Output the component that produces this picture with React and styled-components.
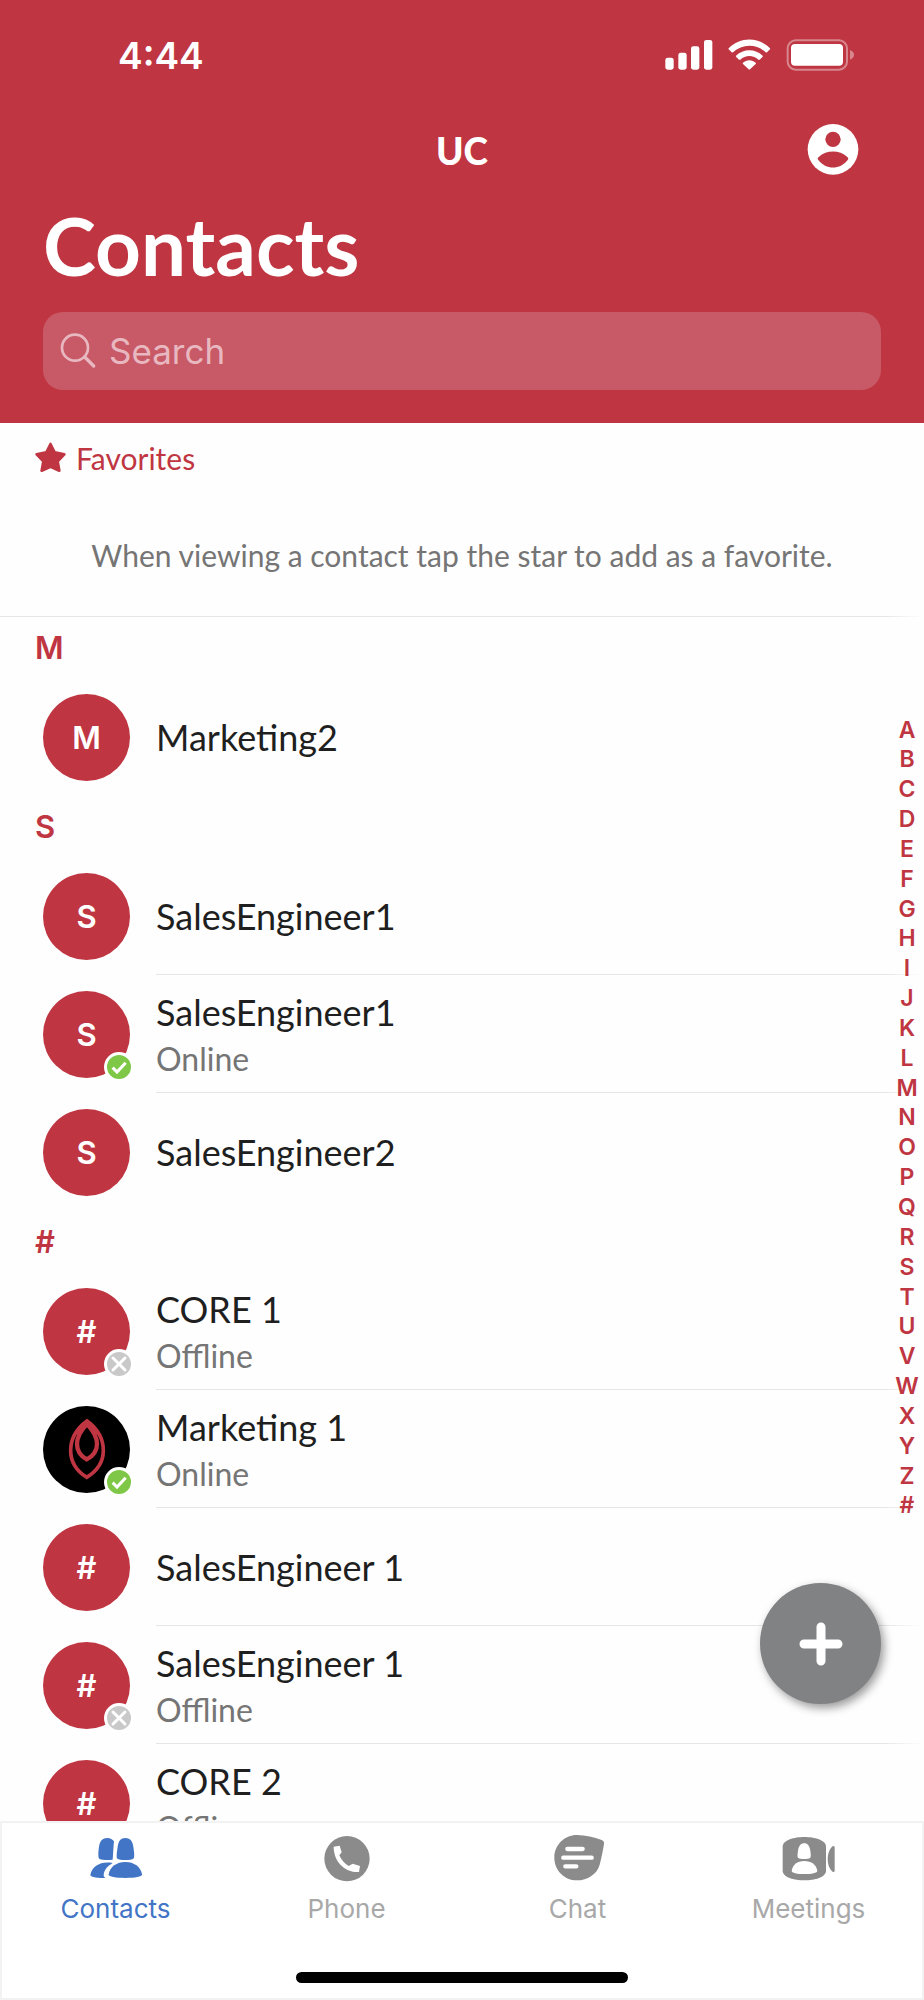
import React, { useState } from "react";
import styled, { createGlobalStyle } from "styled-components";

const RED = "#bf3642";
const BLUE = "#4275c6";

const GlobalStyle = createGlobalStyle`
  * {
    box-sizing: border-box;
  }

  body {
    margin: 0;
    background: #fff;
    font-family: Lato, "Open Sans", sans-serif;
  }
`;

// Styled components
const Screen = styled.div`
  display: flex;
  flex-direction: column;
  height: 100vh;
  background: #fefefe;
`;

const Header = styled.header`
  flex: none;
  padding-bottom: 33px;
  background: ${RED};
  color: #fff;
`;

const StatusBar = styled.div`
  display: flex;
  justify-content: space-between;
  align-items: center;
  height: 110px;
  padding: 0 69px 0 118px;
`;

const Time = styled.time`
  font-family: Inter, sans-serif;
  font-size: 37px;
  font-weight: 600;
`;

const StatusIcons = styled.div`
  display: flex;
  gap: 15px;
`;

const NavBar = styled.div`
  display: grid;
  grid-template-columns: 1fr auto 1fr;
  align-items: center;
  height: 80px;
  padding: 0 65px;
`;

const AppName = styled.span`
  grid-column: 2;
  font-size: 37px;
  font-weight: 900;
`;

const ProfileButton = styled.button`
  display: flex;
  justify-self: end;
  padding: 0;
  border: none;
  background: none;
  color: inherit;
  cursor: pointer;
`;

const Title = styled.h1`
  margin: 0 43px 12px;
  font-size: 80px;
  font-weight: 700;
  line-height: 110px;
`;

const SearchBox = styled.label`
  display: flex;
  align-items: center;
  gap: 12px;
  height: 78px;
  margin: 0 43px;
  padding: 0 16px;
  border-radius: 20px;
  background: #c85966;
  color: #e8b8c1;
`;

const SearchInput = styled.input`
  flex: 1;
  min-width: 0;
  padding: 0;
  border: none;
  outline: none;
  background: none;
  color: #fff;
  font-family: Inter, sans-serif;
  font-size: 35px;

  &::placeholder {
    color: #e8b8c1;
    opacity: 1;
  }
`;

const Main = styled.main`
  position: relative;
  flex: 1;
  min-height: 0;
`;

const ScrollArea = styled.div`
  height: 100%;
  overflow-y: auto;
  scrollbar-width: none;
`;

/* hairline that fades out under the letter index */
const line = `linear-gradient(to right, #e6e6e6 calc(100% - 40px), transparent) bottom / 100% 1px no-repeat`;

const Favorites = styled.section`
  height: 194px;
  background: ${line};
`;

const FavoritesTitle = styled.h2`
  display: flex;
  align-items: center;
  gap: 10px;
  height: 69px;
  margin: 0;
  padding-left: 35px;
  color: ${RED};
  font-size: 30px;
  font-weight: 400;
`;

const FavoritesHint = styled.p`
  display: flex;
  align-items: center;
  justify-content: center;
  height: 125px;
  margin: 0;
  color: #757575;
  font-size: 30px;
`;

const GroupTitle = styled.h2`
  margin: 0;
  padding-left: 35px;
  color: ${RED};
  font-family: Inter, sans-serif;
  font-size: 31px;
  font-weight: 600;
  line-height: 61px;
`;

const List = styled.ul`
  margin: 0;
  padding: 0;
  list-style: none;
`;

const Row = styled.li`
  display: flex;
  align-items: center;
  gap: 26px;
  height: 118px;
  padding-left: 43px;
`;

const Avatar = styled.div`
  position: relative;
  flex: none;
  display: flex;
  align-items: center;
  justify-content: center;
  width: 87px;
  height: 87px;
  border-radius: 50%;
  background: ${(props) => (props.$dark ? "#000" : RED)};
  color: #fff;
  font-family: Inter, sans-serif;
  font-size: 31px;
  font-weight: 600;
`;

const Badge = styled.span`
  position: absolute;
  right: -4px;
  bottom: -4px;
  display: flex;
  width: 30px;
  height: 30px;
  border: 3px solid #fff;
  border-radius: 50%;
  background: ${(props) => (props.$online ? "#7fc847" : "#c9c9c9")};
`;

const RowBody = styled.div`
  flex: 1;
  display: flex;
  flex-direction: column;
  justify-content: center;
  height: 100%;
  background: ${(props) => (props.$last ? "none" : line)};
`;

const Name = styled.span`
  color: #1f1f1f;
  font-size: 36px;
  line-height: 48px;
`;

const Presence = styled.span`
  color: #757575;
  font-size: 32px;
  line-height: 45px;
`;

const LetterIndex = styled.nav`
  position: absolute;
  top: 0;
  right: 4px;
  bottom: 8px;
  display: flex;
  align-items: center;
`;

const Letters = styled.div`
  display: flex;
  flex-direction: column;
  justify-content: space-between;
  align-items: center;
  width: 26px;
  height: 805px;
`;

const Letter = styled.a`
  color: ${RED};
  font-family: Inter, sans-serif;
  font-size: 23px;
  font-weight: 600;
  line-height: 29px;
  text-decoration: none;
`;

const AddButton = styled.button`
  position: absolute;
  right: 43px;
  bottom: 117px;
  display: flex;
  align-items: center;
  justify-content: center;
  width: 121px;
  height: 121px;
  padding: 0;
  border: none;
  border-radius: 50%;
  background: #818283;
  box-shadow: 3px 4px 10px rgba(0, 0, 0, 0.4);
  cursor: pointer;
`;

const TabBar = styled.footer`
  flex: none;
  display: flex;
  flex-direction: column;
  gap: 47px;
  padding: 13px 0 17px;
  background: #fff;
  box-shadow: inset 0 0 0 2px #f2f2f2;
`;

const Tabs = styled.nav`
  display: grid;
  grid-template-columns: repeat(4, 1fr);
`;

const Tab = styled.a`
  display: flex;
  flex-direction: column;
  align-items: center;
  gap: 10px;
  color: ${(props) => (props.$active ? BLUE : "#a8a8a8")};
  font-family: Inter, sans-serif;
  font-size: 26px;
  line-height: 32px;
  text-decoration: none;

  svg {
    color: ${(props) => (props.$active ? BLUE : "#8b8b8b")};
  }
`;

const HomeIndicator = styled.div`
  align-self: center;
  width: 36%;
  height: 11px;
  border-radius: 6px;
  background: #000;
`;

// Icons
const SignalIcon = () => (
  <svg width="48" height="32" viewBox="0 0 144 96" fill="#fff" aria-hidden="true">
    <rect x="1" y="56" width="25" height="36" rx="7" />
    <rect x="40" y="41" width="25" height="51" rx="7" />
    <rect x="78" y="22" width="25" height="70" rx="7" />
    <rect x="117" y="3" width="25" height="89" rx="7" />
  </svg>
);

const WifiIcon = () => (
  <svg width="43" height="32" viewBox="0 0 129 96" fill="#fff" aria-hidden="true">
    <path d="M2 28C36-7 92-7 126 28Q127 30 126 31L117 40Q115 41 113 40C86 14 42 14 15 40Q13 41 11 40L2 31Q1 30 2 28Z" />
    <path d="M24 50C46 28 82 28 104 50Q105 52 104 53L95 62Q93 63 91 62C76 47 52 47 37 62Q35 63 33 62L24 53Q23 52 24 50Z" />
    <path d="M45 71C56 61 72 61 83 71Q85 73 83 75L66 91Q64 93 62 91L45 75Q43 73 45 71Z" />
  </svg>
);

const BatteryIcon = () => (
  <svg width="69" height="32" viewBox="0 0 207 96" aria-hidden="true">
    <rect x="5" y="4" width="178" height="88" rx="24" fill="none" stroke="#fff" strokeOpacity="0.4" strokeWidth="6" />
    <rect x="15" y="15" width="156" height="65" rx="12" fill="#fff" />
    <path d="M192 33Q204 38 204 47.500T192 62Z" fill="#fff" fillOpacity="0.4" />
  </svg>
);

const ProfileIcon = () => (
  <svg width="52" height="52" viewBox="0 0 156 156" aria-hidden="true">
    <circle cx="78" cy="76" r="76" fill="#fff" />
    <circle cx="78" cy="46" r="23" fill={RED} />
    <path d="M34 108C31 105 32 102 35 99C59 77 97 77 121 99C124 102 125 105 122 108C99 138 57 138 34 108Z" fill={RED} />
  </svg>
);

const SearchIcon = () => (
  <svg width="38" height="38" viewBox="0 0 114 114" fill="none" stroke="currentColor" strokeWidth="8" aria-hidden="true">
    <circle cx="48" cy="47" r="39" />
    <path d="M77 75L104 102" strokeWidth="10" strokeLinecap="round" />
  </svg>
);

const StarIcon = () => (
  <svg width="31" height="31" viewBox="0 0 93 93" fill="currentColor" stroke="currentColor" strokeWidth="8" strokeLinejoin="round" aria-hidden="true">
    <path d="M46.500 6L59 31L88 37L68 58L73 86L46.500 74L20 86L25 58L5 37L34 31Z" />
  </svg>
);

const PlusIcon = () => (
  <svg width="44" height="44" viewBox="0 0 44 44" stroke="#fff" strokeWidth="9" strokeLinecap="round" aria-hidden="true">
    <path d="M22 5V39M5 22H39" />
  </svg>
);

const PresenceIcon = ({ online }) => (
  <svg width="24" height="24" viewBox="0 0 72 72" fill="none" stroke="#fff" strokeWidth="9" aria-hidden="true">
    {online ? (
      <path d="M17 38L30 51L56 23" />
    ) : (
      <path d="M18 18L54 54M54 18L18 54" strokeLinecap="round" />
    )}
  </svg>
);

const LeafLogo = () => (
  <svg width="38" height="62" viewBox="0 0 114 186" fill="none" stroke={RED} aria-hidden="true">
    <path d="M57 9C20 36 8 66 8 98C8 130 25 158 56 178C88 158 106 130 106 98C106 66 94 36 57 9Z" strokeWidth="11" />
    <path d="M57 18C36 40 27 57 27 78C27 99 36 113 56 124C78 113 87 99 87 78C87 57 78 40 57 18Z" strokeWidth="13" />
    <path d="M57 4C38 16 26 30 19 48L30 50L57 24L84 50L95 48C88 30 76 16 57 4Z" fill={RED} stroke="none" />
  </svg>
);

const ContactsIcon = () => (
  <svg width="56" height="49" viewBox="0 0 168 147" fill="currentColor" aria-hidden="true">
    <path d="M58 12C68 12 73 16 78 22C76 38 76 56 74 77C60 79 42 78 35 75C29 72 31 52 33 38C36 20 44 12 58 12Z" />
    <path d="M112 12C126 12 133 20 136 38C138 52 141 70 136 74C130 79 94 79 88 74C84 70 87 52 89 38C92 20 98 12 112 12Z" />
    <path d="M112 84C138 84 158 98 162 121C163 129 140 132 112 132C84 132 61 129 62 121C66 98 86 84 112 84Z" />
    <path d="M74 87C56 98 47 110 47 125Q47 129 53 132C34 132 7 130 7 122C13 96 38 81 74 87Z" />
  </svg>
);

const PhoneIcon = () => (
  <svg width="56" height="49" viewBox="0 0 168 147" aria-hidden="true">
    <circle cx="84" cy="74" r="68" fill="currentColor" />
    <path d="M44 38L62 35L68 55L61 64C67 78 77 89 89 96L101 89L123 96L120 114C78 116 44 84 44 38Z" fill="#fff" />
  </svg>
);

const ChatIcon = () => (
  <svg width="56" height="49" viewBox="0 0 168 147" aria-hidden="true">
    <path d="M81 3C107 3 132 10 155 18C161 20 163 24 162 31C158 54 154 74 149 92C142 120 112 139 81 139C43 139 13 109 13 71C13 33 43 3 81 3Z" fill="currentColor" />
    <path d="M52 45H98M40 71H125M46 97H79" stroke="#fff" strokeWidth="13" strokeLinecap="round" />
  </svg>
);

const MeetingsIcon = () => (
  <svg width="56" height="49" viewBox="0 0 168 147" fill="currentColor" aria-hidden="true">
    <path d="M5 38C5 18 40 9 70 9C100 9 135 18 135 38V110C135 130 100 139 70 139C40 139 5 130 5 110Z" />
    <path d="M161 40C161 36 156 34 153 38C145 46 140 60 140 75C140 91 145 104 153 112C156 116 161 114 161 110Z" />
    <path d="M70 28C80 28 86 36 88 50C89 58 91 69 87 72C82 76 57 76 52 72C48 69 50 58 51 50C53 36 59 28 70 28Z" fill="#fff" />
    <path d="M70 81C92 81 105 92 109 110C110 117 90 120 70 120C50 120 31 117 32 110C36 92 48 81 70 81Z" fill="#fff" />
  </svg>
);

const groups = [
  {
    title: "M",
    contacts: [{ id: 1, name: "Marketing2" }],
  },
  {
    title: "S",
    contacts: [
      { id: 2, name: "SalesEngineer1" },
      { id: 3, name: "SalesEngineer1", presence: "Online" },
      { id: 4, name: "SalesEngineer2" },
    ],
  },
  {
    title: "#",
    contacts: [
      { id: 5, name: "CORE 1", presence: "Offline" },
      { id: 6, name: "Marketing 1", presence: "Online", logo: true },
      { id: 7, name: "SalesEngineer 1" },
      { id: 8, name: "SalesEngineer 1", presence: "Offline" },
      { id: 9, name: "CORE 2", presence: "Offline" },
    ],
  },
];

const letters = "ABCDEFGHIJKLMNOPQRSTUVWXYZ#".split("");

const tabs = [
  { label: "Contacts", Icon: ContactsIcon },
  { label: "Phone", Icon: PhoneIcon },
  { label: "Chat", Icon: ChatIcon },
  { label: "Meetings", Icon: MeetingsIcon },
];

const Contact = ({ contact, initial, last }) => (
  <Row>
    <Avatar $dark={contact.logo}>
      {contact.logo ? <LeafLogo /> : initial}
      {contact.presence && (
        <Badge $online={contact.presence === "Online"}>
          <PresenceIcon online={contact.presence === "Online"} />
        </Badge>
      )}
    </Avatar>
    <RowBody $last={last}>
      <Name>{contact.name}</Name>
      {contact.presence && <Presence>{contact.presence}</Presence>}
    </RowBody>
  </Row>
);

const App = () => {
  const [search, setSearch] = useState("");
  const [activeTab, setActiveTab] = useState("Contacts");

  // Keep only the groups that still have a matching contact
  const visibleGroups = groups
    .map((group) => ({
      ...group,
      contacts: group.contacts.filter((contact) =>
        contact.name.toLowerCase().includes(search.toLowerCase())
      ),
    }))
    .filter((group) => group.contacts.length > 0);

  return (
    <Screen>
      <GlobalStyle />
      <Header>
        <StatusBar>
          <Time>4:44</Time>
          <StatusIcons>
            <SignalIcon />
            <WifiIcon />
            <BatteryIcon />
          </StatusIcons>
        </StatusBar>
        <NavBar>
          <AppName>UC</AppName>
          <ProfileButton type="button" aria-label="Profile">
            <ProfileIcon />
          </ProfileButton>
        </NavBar>
        <Title>Contacts</Title>
        <SearchBox>
          <SearchIcon />
          <SearchInput
            type="text"
            placeholder="Search"
            aria-label="Search"
            value={search}
            onChange={(e) => setSearch(e.target.value)}
          />
        </SearchBox>
      </Header>
      <Main>
        <ScrollArea>
          <Favorites>
            <FavoritesTitle>
              <StarIcon />
              Favorites
            </FavoritesTitle>
            <FavoritesHint>When viewing a contact tap the star to add as a favorite.</FavoritesHint>
          </Favorites>
          {visibleGroups.map((group) => (
            <section key={group.title} id={`group-${group.title}`}>
              <GroupTitle>{group.title}</GroupTitle>
              <List>
                {group.contacts.map((contact, index) => (
                  <Contact
                    key={contact.id}
                    contact={contact}
                    initial={group.title}
                    last={index === group.contacts.length - 1}
                  />
                ))}
              </List>
            </section>
          ))}
        </ScrollArea>
        <LetterIndex aria-label="Letter index">
          <Letters>
            {letters.map((letter) => (
              <Letter key={letter} href={`#group-${letter}`}>
                {letter}
              </Letter>
            ))}
          </Letters>
        </LetterIndex>
        <AddButton type="button" aria-label="Add contact">
          <PlusIcon />
        </AddButton>
      </Main>
      <TabBar>
        <Tabs>
          {tabs.map(({ label, Icon }) => (
            <Tab
              key={label}
              href={`#${label.toLowerCase()}`}
              $active={activeTab === label}
              onClick={() => setActiveTab(label)}
            >
              <Icon />
              {label}
            </Tab>
          ))}
        </Tabs>
        <HomeIndicator />
      </TabBar>
    </Screen>
  );
};

export default App;
